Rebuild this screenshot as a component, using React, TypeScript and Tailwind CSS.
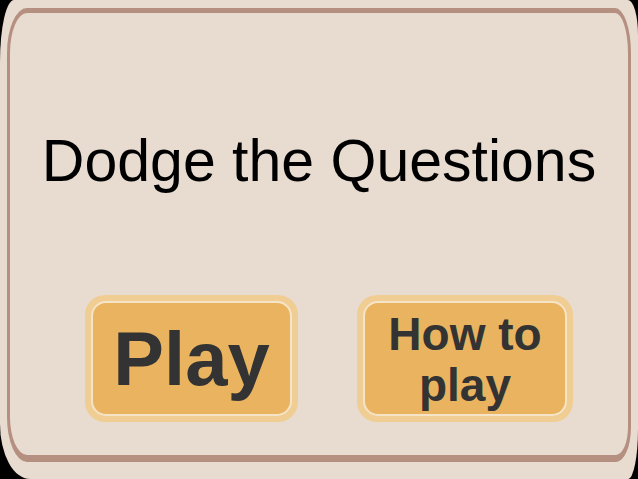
import React from 'react';

const font = { fontFamily: '"Liberation Sans", Arial, sans-serif' };

interface MenuButtonProps {
    width: string;
    children: React.ReactNode;
}

const MenuButton: React.FC<MenuButtonProps> = ({ width, children }) => (
    <div className={`${width} h-[127px] rounded-[20px] bg-[#f0cd93] p-[6px]`}>
        <div className="flex h-full w-full items-center justify-center rounded-[15px] border-2 border-[#f6e4c8] bg-[#e9b35f] text-center font-bold text-[#333333]">
            {children}
        </div>
    </div>
);

export default function App() {
    return (
        <div className="h-[479px] w-[638px] overflow-hidden bg-black" style={font}>
            <div className="h-full w-full rounded-tl-[14px_62px] rounded-tr-[10px_35px] rounded-br-[10px_50px] rounded-bl-[30px_55px] bg-[#e8dbd0] pb-[17px] pl-[7px] pr-[7px] pt-[8px]">
                <div className="flex h-full w-full flex-col rounded-tl-[20px_45px] rounded-tr-[16px_45px] rounded-br-[15px_35px] rounded-bl-[20px_45px] border-x-[3px] border-b-[7px] border-t-[5px] border-[#b58f80]">
                    <h1 className="mt-[119px] text-center text-[59px] font-normal leading-none text-black">
                        Dodge the Questions
                    </h1>
                    <div className="mt-[104px] flex gap-[59px] pl-[75px]">
                        <MenuButton width="w-[213px]">
                            <span className="text-[76px] leading-none">Play</span>
                        </MenuButton>
                        <MenuButton width="w-[216px]">
                            <span className="mt-[2px] text-[46px] leading-[51px]">How to<br />play</span>
                        </MenuButton>
                    </div>
                </div>
            </div>
        </div>
    );
}
